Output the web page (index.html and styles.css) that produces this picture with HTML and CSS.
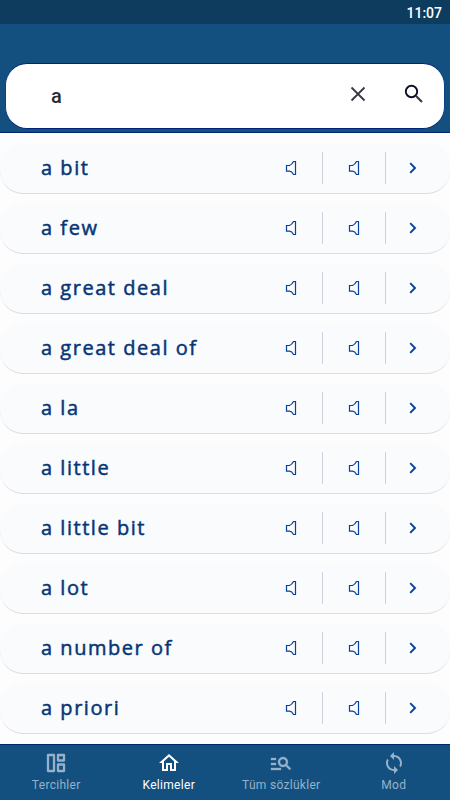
FILE: index.html
```
<!DOCTYPE html>
<html lang="tr">
<head>
	<meta charset="utf-8">
	<title>Kelimeler</title>
	<link rel="stylesheet" href="styles.css">
</head>
<body>
	<svg class="defs">
		<symbol id="speaker" viewBox="0 0 12 16">
			<path d="M1.5 5.5H4.5Q7 4.5 8.5 1.5H10.5V14.5H8.5Q7 11.5 4.5 11.2H1.5Z" fill="none" stroke="#06409a" stroke-width="1.2"/>
		</symbol>
		<symbol id="chevron" viewBox="0 0 8 12">
			<path d="M1.2 1.2L6 6L1.2 10.8" fill="none" stroke="#06409a" stroke-width="1.9"/>
		</symbol>
	</svg>
	<div class="status">11:07</div>
	<header>
		<div class="search">
			<span class="query">a</span>
			<svg class="clear" viewBox="0 0 16 16"><path d="M1.5 1.5L14.5 14.5M14.5 1.5L1.5 14.5" fill="none" stroke="#353942" stroke-width="1.8"/></svg>
			<svg class="find" viewBox="0 0 24 24" fill="none"><circle cx="9.5" cy="9.5" r="5.7" stroke="#0c1226" stroke-width="1.9"/><path d="M13.8 13.8L20 20" stroke="#353942" stroke-width="2.1"/></svg>
		</div>
	</header>
	<ul id="words"></ul>
	<nav>
		<div class="tab">
			<svg viewBox="0 0 24 24"><path d="M4 4H10V20H4ZM14 4H20V9.5H14ZM14 13.5H20V20H14Z" fill="none" stroke="currentColor" stroke-width="2.3" stroke-linejoin="round"/></svg>
			<span>Tercihler</span>
		</div>
		<div class="tab active">
			<svg viewBox="0 0 24 24"><path fill="currentColor" d="M12 5.69l5 4.5V18h-2v-6H9v6H7v-7.81l5-4.5M12 3L2 12h3v8h6v-6h2v6h6v-8h3L12 3z"/></svg>
			<span>Kelimeler</span>
		</div>
		<div class="tab">
			<svg viewBox="0 0 24 24"><path fill="currentColor" d="M7 9H2V7h5v2zm0 3H2v2h5v-2zm13.59 7l-3.83-3.83c-.8.52-1.74.83-2.76.83-2.76 0-5-2.24-5-5s2.24-5 5-5 5 2.24 5 5c0 1.02-.31 1.96-.83 2.75L22 17.59 20.59 19zM17 11c0-1.65-1.35-3-3-3s-3 1.35-3 3 1.35 3 3 3 3-1.35 3-3zM2 19h10v-2H2v2z" stroke="currentColor" stroke-width="0.3"/></svg>
			<span>Tüm sözlükler</span>
		</div>
		<div class="tab">
			<svg viewBox="0 0 24 24"><path fill="currentColor" d="M12 4V1L8 5l4 4V6c3.31 0 6 2.69 6 6 0 1.01-.25 1.97-.7 2.8l1.46 1.46A7.93 7.93 0 0 0 20 12c0-4.42-3.58-8-8-8zm0 14c-3.31 0-6-2.69-6-6 0-1.01.25-1.97.7-2.8L5.24 7.74A7.93 7.93 0 0 0 4 12c0 4.42 3.58 8 8 8v3l4-4-4-4v3z"/></svg>
			<span>Mod</span>
		</div>
	</nav>
	<script src="main.js"></script>
</body>
</html>
```
FILE: styles.css
```
* {
	box-sizing: border-box;
}
body {
	margin: 0;
	height: 800px;
	display: flex;
	flex-direction: column;
	overflow: hidden;
	background: #fdfdfe;
	font-family: Roboto, sans-serif;
}
svg {
	display: block;
	flex: none;
}
.defs {
	display: none;
}
.status {
	height: 24px;
	padding-right: 8px;
	background: #0d3c5f;
	color: #fff;
	font-size: 14px;
	font-weight: 500;
	line-height: 26px;
	text-align: right;
}
header {
	height: 109px;
	padding: 39px 5px 0;
	background: #13507f;
	border-bottom: 1px solid #00246b;
}
.search {
	display: flex;
	align-items: center;
	height: 66px;
	padding: 0 18px 4px 45px;
	border: 1px solid #00247a;
	border-left-color: #0d4280;
	border-right-color: #0d4280;
	border-radius: 22px;
	background: #fff;
}
.query {
	flex: 1;
	padding-top: 4px;
	color: #2b2b2b;
	font-size: 20px;
	font-weight: 500;
}
.clear {
	width: 16px;
	height: 16px;
	margin-right: 36px;
}
.find {
	width: 24px;
	height: 24px;
}
#words {
	flex: 1;
	display: flex;
	flex-direction: column;
	gap: 9px;
	margin: 0;
	padding: 10px 0 0;
	list-style: none;
}
#words li {
	display: flex;
	align-items: center;
	height: 51px;
	padding-left: 41px;
	border-bottom: 1px solid #dcdde1;
	border-radius: 23px;
	background: #fafbfd;
}
.word {
	flex: 1;
	padding-bottom: 1px;
	color: #073676;
	font-family: "Open Sans", sans-serif;
	font-size: 20px;
	letter-spacing: 1.53px;
	-webkit-text-stroke: 0.5px #073676;
}
.sound {
	display: flex;
	align-items: center;
	justify-content: center;
	width: 63px;
	height: 32px;
	border-right: 1px solid #d0cfdc;
}
.sound svg {
	width: 12px;
	height: 16px;
}
.more {
	width: 64px;
	padding-left: 23px;
}
.more svg {
	width: 8px;
	height: 12px;
}
nav {
	display: flex;
	height: 56px;
	border-top: 1px solid #00246f;
	background: #13507f;
}
.tab {
	flex: 1;
	display: flex;
	flex-direction: column;
	align-items: center;
	padding-top: 6px;
	color: #96b2ca;
	font-size: 12px;
	line-height: 14px;
	letter-spacing: 0.3px;
}
.tab svg {
	width: 24px;
	height: 24px;
	margin-bottom: 3px;
}
.tab.active {
	color: #fff;
}
```
FILE: main.js
```
(function() {
	var words = ['a bit', 'a few', 'a great deal', 'a great deal of', 'a la', 'a little', 'a little bit', 'a lot', 'a number of', 'a priori'];
	var list = document.getElementById('words');
	var sound = '<span class="sound"><svg><use href="#speaker"/></svg></span>';

	words.forEach(function(word) {
		var li = document.createElement('li');
		li.innerHTML = '<span class="word">' + word + '</span>' + sound + sound +
			'<span class="more"><svg><use href="#chevron"/></svg></span>';
		list.appendChild(li);
	});
})();
```
